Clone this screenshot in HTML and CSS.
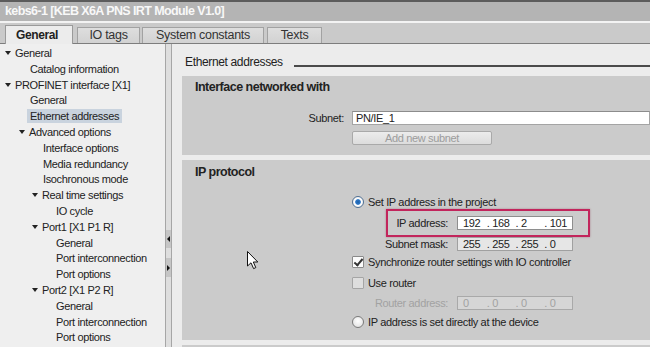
FILE: index.html
```html
<!DOCTYPE html>
<html>
<head>
<meta charset="utf-8">
<link rel="stylesheet" href="styles.css">
</head>
<body>
<div class="window">
  <div class="titlebar">kebs6-1 [KEB X6A PNS IRT Module V1.0]</div>
  <div class="tabstrip">
    <div class="tab active w-general">General</div>
    <div class="tab w-io">IO tags</div>
    <div class="tab w-sys">System constants</div>
    <div class="tab w-texts">Texts</div>
  </div>
  <div class="main">
    <ul class="tree">
      <li class="l0"><i class="tw"></i>General</li>
      <li class="l1">Catalog information</li>
      <li class="l0"><i class="tw"></i>PROFINET interface [X1]</li>
      <li class="l1">General</li>
      <li class="l1"><span class="sel">Ethernet addresses</span></li>
      <li class="l1"><i class="tw"></i>Advanced options</li>
      <li class="l2">Interface options</li>
      <li class="l2">Media redundancy</li>
      <li class="l2">Isochronous mode</li>
      <li class="l2"><i class="tw"></i>Real time settings</li>
      <li class="l3">IO cycle</li>
      <li class="l2"><i class="tw"></i>Port1 [X1 P1 R]</li>
      <li class="l3">General</li>
      <li class="l3">Port interconnection</li>
      <li class="l3">Port options</li>
      <li class="l2"><i class="tw"></i>Port2 [X1 P2 R]</li>
      <li class="l3">General</li>
      <li class="l3">Port interconnection</li>
      <li class="l3">Port options</li>
    </ul>
    <div class="splitter">
      <span class="sbtn first"><i class="tri-left"></i></span>
      <span class="sbtn second"><i class="tri-right"></i></span>
    </div>
    <div class="content">
      <div class="section-title"><span>Ethernet addresses</span><i class="rule"></i></div>
      <div class="panel p1">
        <div class="panel-head">Interface networked with</div>
        <div class="subnet-row">
          <label class="subnet-label">Subnet:</label>
          <div class="textbox">PN/IE_1</div>
        </div>
        <div class="btn">Add new subnet</div>
      </div>
      <div class="panel p2">
        <div class="panel-head">IP protocol</div>
        <div class="controls">
          <div class="opt r1"><i class="radio on"></i><span>Set IP address in the project</span></div>
          <div class="addr-row ip hl">
            <label class="addr-label">IP address:</label>
            <div class="addr white"><span class="seg s1">192</span><span class="seg">. 168</span><span class="seg">. 2</span><span class="seg">. 101</span></div>
          </div>
          <div class="addr-row mask">
            <label class="addr-label">Subnet mask:</label>
            <div class="addr grey"><span class="seg s1">255</span><span class="seg">. 255</span><span class="seg">. 255</span><span class="seg">. 0</span></div>
          </div>
          <div class="opt sync"><i class="check on"></i><span>Synchronize router settings with IO controller</span></div>
          <div class="opt router"><i class="check off"></i><span>Use router</span></div>
          <div class="addr-row raddr disabled">
            <label class="addr-label">Router address:</label>
            <div class="addr grey"><span class="seg s1">0</span><span class="seg">. 0</span><span class="seg">. 0</span><span class="seg">. 0</span></div>
          </div>
          <div class="opt r2"><i class="radio"></i><span>IP address is set directly at the device</span></div>
        </div>
      </div>
      <div class="panel p3"></div>
    </div>
  </div>
  <svg class="cursor" width="13" height="19" viewBox="0 0 13 19">
    <path d="M0.5 0.5 L0.5 15 L4 11.8 L6.6 17.6 L8.8 16.6 L6.3 11 L10.8 11 Z" fill="#fff" stroke="#111" stroke-width="1" stroke-linejoin="round"/>
  </svg>
</div>
</body>
</html>
```

FILE: styles.css
```css
* { box-sizing: border-box; }
html, body { margin: 0; padding: 0; }
body {
  width: 650px;
  height: 347px;
  overflow: hidden;
  background: #ececec;
  font-family: "Liberation Sans", Arial, sans-serif;
  color: #222;
}
.window { position: relative; width: 650px; height: 347px; }

.titlebar {
  height: 21px;
  border-top: 2px solid #5c5c5c;
  background: #b4b4b4;
  color: #f8f8f8;
  font-weight: bold;
  font-size: 12.5px;
  letter-spacing: -0.6px;
  line-height: 19px;
  padding-left: 5px;
  white-space: nowrap;
}

.tabstrip {
  height: 23px;
  border-top: 2px solid #f3f3f3;
  border-bottom: 1px solid #7d7d7d;
  background: #cacaca;
  display: flex;
  align-items: flex-end;
  padding-left: 5px;
}
.tab {
  height: 16px;
  border: 1px solid #a2a2a2;
  border-bottom: none;
  background: linear-gradient(#dedede, #d2d2d2);
  font-size: 12.5px;
  letter-spacing: -0.3px;
  line-height: 15px;
  text-align: center;
  color: #333;
}
.tab.active {
  height: 19px;
  margin-bottom: -1px;
  background: #ececec;
  border-color: #9a9a9a;
  font-weight: bold;
  font-size: 12px;
  letter-spacing: -0.4px;
  line-height: 18px;
  color: #222;
  padding-right: 4px;
}
.w-general { width: 68px; margin-right: 4px; }
.w-io { width: 63px; margin-right: 2px; }
.w-sys { width: 122px; margin-right: 3px; }
.w-texts { width: 55px; }

.main { display: flex; height: 303px; }

.tree {
  list-style: none;
  margin: 0;
  padding: 2px 0 0 0;
  width: 165px;
  background: #efefef;
  font-size: 11px;
  letter-spacing: -0.35px;
  line-height: 15.8px;
  color: #222;
  white-space: nowrap;
}
.tree li { height: 15.8px; }
.l0 { padding-left: 16px; }
.l1 { padding-left: 30px; }
.l2 { padding-left: 43px; }
.l3 { padding-left: 56px; }
.tw {
  display: inline-block;
  width: 0;
  height: 0;
  margin-left: -11px;
  margin-right: 4px;
  border-left: 3.5px solid transparent;
  border-right: 3.5px solid transparent;
  border-top: 4.5px solid #222;
  vertical-align: 2px;
}
.sel {
  background: #c9d3de;
  padding: 1px 3px;
  margin-left: -3px;
}

.splitter {
  width: 7px;
  border-left: 1px solid #a6a6a6;
  border-right: 1px solid #a6a6a6;
  background: #dedede;
  display: flex;
  flex-direction: column;
}
.sbtn {
  display: flex;
  align-items: center;
  justify-content: center;
  background: #c5c5c5;
}
.sbtn.first { margin-top: 186px; height: 18px; }
.sbtn.second { margin-top: 10px; height: 19px; }
.tri-left {
  width: 0; height: 0;
  border-top: 3px solid transparent;
  border-bottom: 3px solid transparent;
  border-right: 3px solid #111;
}
.tri-right {
  width: 0; height: 0;
  border-top: 3px solid transparent;
  border-bottom: 3px solid transparent;
  border-left: 3px solid #111;
}

.content {
  flex: 1;
  padding: 10px 0 0 10px;
  overflow: hidden;
  background: #ececec;
}
.section-title {
  display: flex;
  height: 16px;
  font-size: 12px;
  letter-spacing: -0.35px;
  line-height: 16px;
  padding-left: 3px;
  color: #222;
  margin-bottom: 6px;
}
.rule {
  flex: 1;
  height: 13px;
  margin-left: 11px;
  border-bottom: 2px solid #4a4a4a;
}

.panel { background: #cbcbcb; }
.panel-head {
  font-weight: bold;
  font-size: 12.5px;
  letter-spacing: -0.5px;
  line-height: 16px;
  padding-left: 13px;
  color: #222;
}
.p1 { height: 79px; padding-top: 3px; margin-bottom: 5px; }
.p2 { height: 180px; padding-top: 4px; margin-bottom: 5px; }
.p3 { height: 20px; }

.subnet-row { display: flex; margin-top: 16px; height: 14px; font-size: 11px; letter-spacing: -0.35px; }
.subnet-label {
  width: 162px;
  text-align: right;
  margin-right: 8px;
  line-height: 14px;
}
.textbox {
  flex: 1;
  height: 14px;
  background: #fff;
  border: 1px solid #a4a4a4;
  border-top-color: #8c8c8c;
  line-height: 12px;
  padding-left: 3px;
  color: #222;
}
.btn {
  margin: 6px 0 0 170px;
  width: 140px;
  height: 14px;
  border: 1px solid #a9a9a9;
  border-radius: 2px;
  background: linear-gradient(#ececec, #dcdcdc);
  color: #9c9c9c;
  font-size: 11px;
  letter-spacing: -0.35px;
  line-height: 12px;
  text-align: center;
}

.controls { margin-left: 170px; margin-top: 15px; font-size: 11px; letter-spacing: -0.35px; }
.opt { display: flex; align-items: center; height: 14px; line-height: 14px; white-space: nowrap; }
.opt span { margin-left: 4px; }
.radio {
  display: inline-block;
  width: 12px;
  height: 12px;
  border-radius: 50%;
  border: 1px solid #7a7a7a;
  background: radial-gradient(circle at 50% 40%, #ffffff, #dcdcdc);
  position: relative;
}
.radio.on {
  border-color: #4f6f93;
  background: radial-gradient(circle, #1d5fa8 0, #2d78c8 2.4px, #ffffff 3.2px, #eaeaea 6px);
}
.check {
  display: inline-block;
  width: 12px;
  height: 12px;
  border: 1px solid #8a8a8a;
  border-radius: 1px;
  position: relative;
}
.check.on { background: #fbfbfb; }
.check.off { background: #dedede; border-color: #a5a5a5; }
.check.on::after {
  content: "";
  position: absolute;
  left: 3px;
  top: 0px;
  width: 3px;
  height: 7px;
  border-right: 2px solid #333;
  border-bottom: 2px solid #333;
  transform: rotate(40deg);
}

.addr-row { display: flex; height: 14px; position: relative; }
.addr-label {
  width: 96px;
  margin-right: 9px;
  text-align: right;
  line-height: 14px;
  white-space: nowrap;
}
.addr {
  width: 116px;
  height: 14px;
  border: 1px solid #a0a0a0;
  display: flex;
  line-height: 12px;
  color: #222;
}
.addr.white { background: #fff; border-color: #8e8e8e; }
.addr.grey { background: #e6e6e6; }
.seg { width: 29px; padding-left: 1px; white-space: nowrap; }
.seg.s1 { width: 28px; padding-left: 5px; }
.disabled .addr-label, .disabled .addr { color: #a2a2a2; }
.disabled .addr { background: #d6d6d6; border-color: #a9a9a9; }

.r1 { margin-top: 0; }
.ip { margin-top: 7px; }
.mask { margin-top: 7px; }
.sync { margin-top: 4px; }
.router { margin-top: 7px; }
.raddr { margin-top: 6px; }
.r2 { margin-top: 5px; }

.hl::after {
  content: "";
  position: absolute;
  left: 34px;
  top: -7px;
  width: 200px;
  height: 24px;
  border: 2px solid #c2255c;
  box-shadow: 0 0 2px rgba(120, 0, 40, 0.35);
  pointer-events: none;
}

.cursor { position: absolute; left: 247px; top: 251px; }
```
